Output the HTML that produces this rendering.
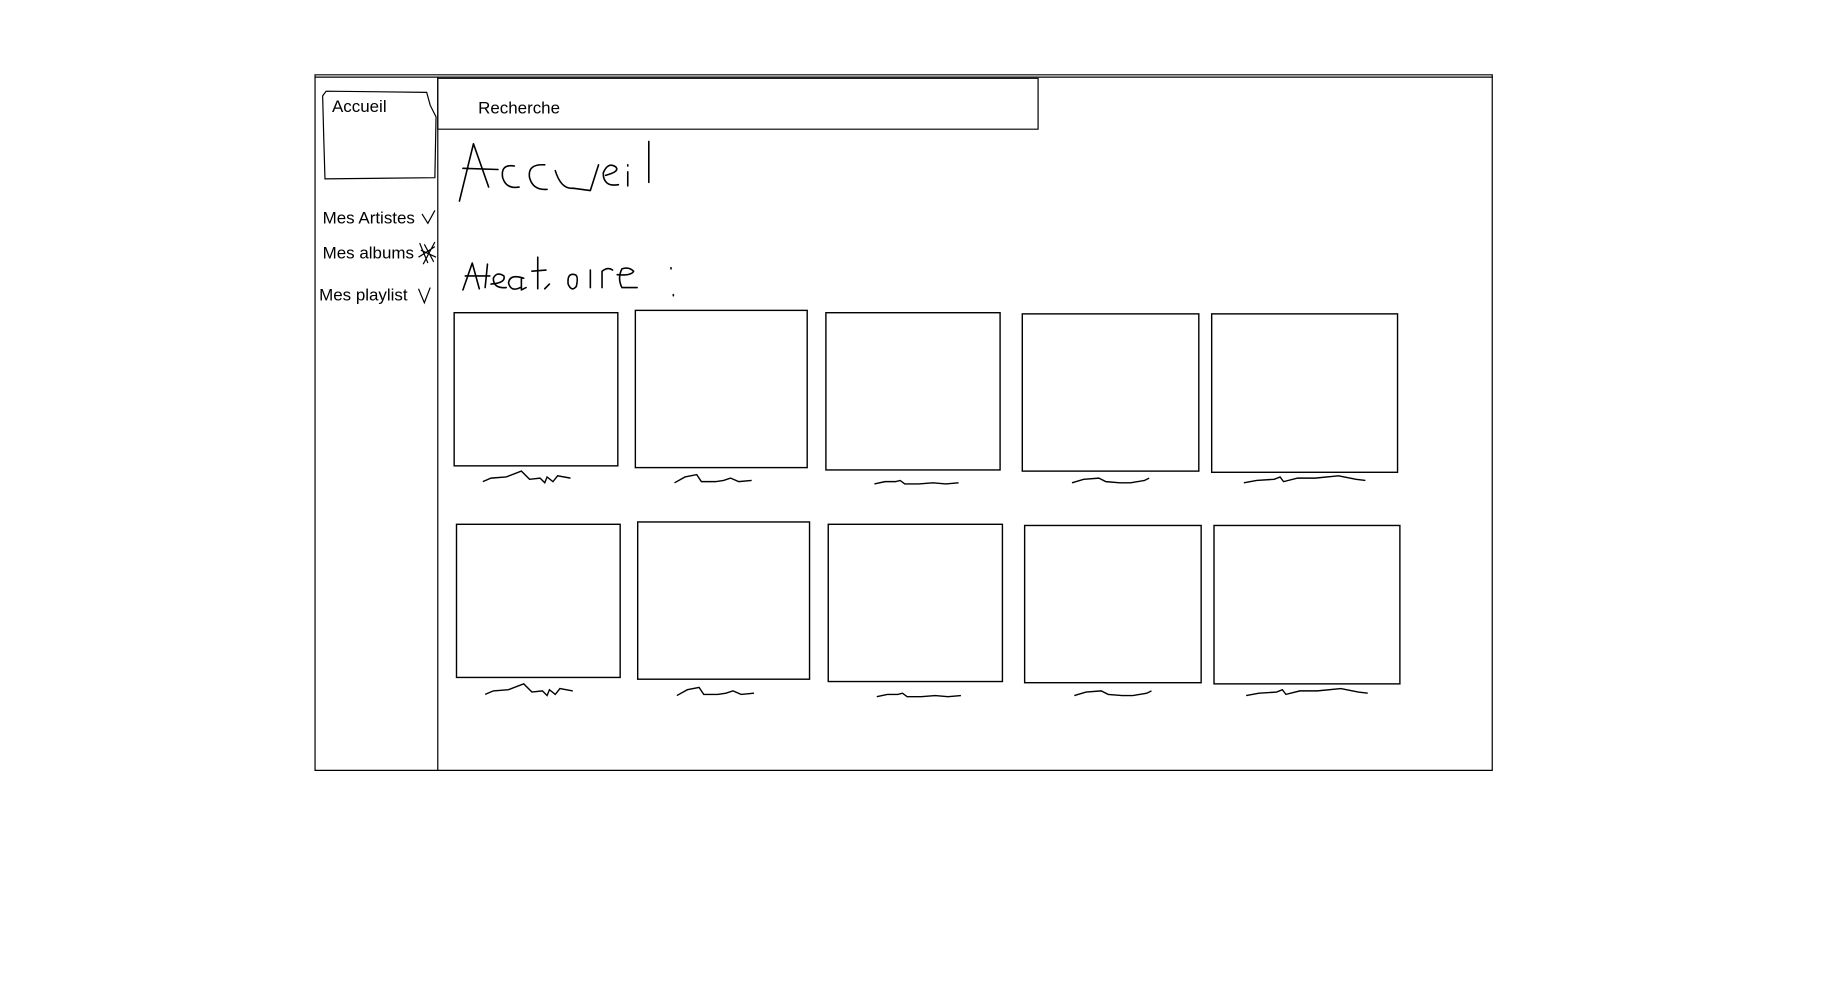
<!DOCTYPE html>
<html><head><meta charset="utf-8"><style>
html,body{margin:0;padding:0;background:#fff;width:1833px;height:1005px;overflow:hidden}
svg{display:block}
text{font-family:"Liberation Sans",sans-serif;font-size:14.5px;fill:#000}
.s{fill:none;stroke:#000;stroke-width:1.2;vector-effect:non-scaling-stroke}
.h{fill:none;stroke:#000;stroke-width:1.6;vector-effect:non-scaling-stroke;stroke-linejoin:round;stroke-linecap:round}
</style></head><body>
<svg width="1833" height="1005" viewBox="0 0 1568 859.7">
<rect x="269.5" y="64" width="1007" height="595" class="s"/>
<line x1="269" y1="66" x2="1277" y2="66" class="s"/>
<line x1="374.5" y1="66" x2="374.5" y2="659" class="s"/>
<rect x="374.5" y="67" width="513.5" height="43.5" class="s"/>
<text x="409" y="97">Recherche</text>
<path class="s" d="M279 78 L365 79 L368 90 L373 100 L372 152 L278 153 L277 120 L276 82 Z"/>
<text x="284" y="96">Accueil</text>
<text x="276" y="191">Mes Artistes</text>
<path class="s" d="M361 183 L366 191 L372 180"/>
<text x="276" y="221">Mes albums</text>
<path class="s" d="M359 208 L366 225 M372 207 L362 226 M360 214 L373 220 M363 209 L371 224 M358 220 L372 211"/>
<text x="273" y="257">Mes playlist</text>
<path class="s" d="M358 247 L363 259 L368 246"/>
<path class="h" d="M393 172 L405 123 L418 160 M396 144 L426 145 M440 142 Q428 140 430 152 Q433 162 444 160 M466 141 Q451 140 453 152 Q456 163 468 162 M475 146 Q480 162 490 161 L505 163 L512 141 M518 150 Q530 147 527 143 Q520 138 516 148 Q516 160 529 158 M537 147 L537 159 M537 141 L537 142 M555 121 L555 156"/>
<path class="h" d="M396 248 L404 225 L410 247 M398 236 L419 236 M415 246 L417 226 M420 243 Q433 242 431 236 Q425 232 422 238 Q422 247 433 246 M448 238 Q436 234 435 242 Q437 250 445 246 M446 238 L446 248 L450 246 M455 232 L467 231 M460 220 L460 247 M466 247 L470 243 M492 235 Q485 233 486 243 Q489 250 493 245 Q495 236 492 235 M505 231 L505 246 M515 246 L515 232 Q520 228 524 231 M528 235 Q540 236 542 232 Q538 228 532 230 Q528 238 532 246 L545 246 M574 229 L574 230 M576 252 L576 253"/>
<g class="s">
<rect x="388.5" y="267.5" width="140" height="131"/>
<rect x="543.5" y="265.5" width="147" height="134.5"/>
<rect x="706.5" y="267.5" width="149" height="134.5"/>
<rect x="874.5" y="268.5" width="151" height="134.5"/>
<rect x="1036.5" y="268.5" width="159" height="135.5"/>
<rect x="390.5" y="448.5" width="140" height="131"/>
<rect x="545.5" y="446.5" width="147" height="134.5"/>
<rect x="708.5" y="448.5" width="149" height="134.5"/>
<rect x="876.5" y="449.5" width="151" height="134.5"/>
<rect x="1038.5" y="449.5" width="159" height="135.5"/>
</g>
<g class="s">
<path d="M413 412 L420 409 L433 408 L446 403 L453 410 L462 409 L466 413 L468 408 L473 412 L477 407 L488 409"/>
<path d="M577 413 L586 408 L596 406 L600 412 L612 412 L619 411 L625 409 L632 412 L643 411"/>
<path d="M748 414 L757 412 L766 412 L770 411 L774 414 L786 414 L798 413 L809 414 L820 413"/>
<path d="M917 413 L927 410 L940 409 L946 412 L958 413 L967 413 L979 411 L983 409"/>
<path d="M1064 413 L1075 411 L1090 410 L1095 408 L1098 412 L1110 409 L1125 409 L1145 407 L1160 410 L1168 411"/>
<path d="M415 594 L422 591 L435 590 L448 585 L455 592 L464 591 L468 595 L470 590 L475 594 L479 589 L490 591"/>
<path d="M579 595 L588 590 L598 588 L602 594 L614 594 L621 593 L627 591 L634 594 L645 593"/>
<path d="M750 596 L759 594 L768 594 L772 593 L776 596 L788 596 L800 595 L811 596 L822 595"/>
<path d="M919 595 L929 592 L942 591 L948 594 L960 595 L969 595 L981 593 L985 591"/>
<path d="M1066 595 L1077 593 L1092 592 L1097 590 L1100 594 L1112 591 L1127 591 L1147 589 L1162 592 L1170 593"/>
</g>
</svg>
</body></html>
